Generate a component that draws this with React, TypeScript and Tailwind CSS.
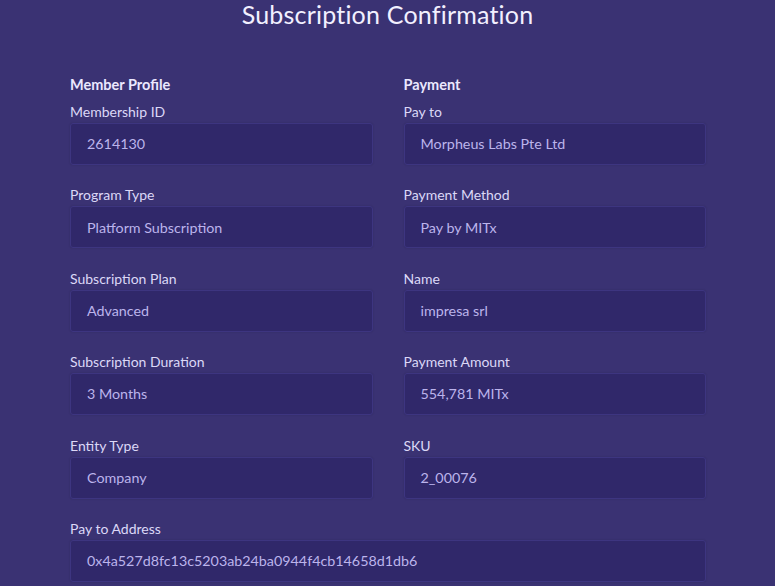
import React from 'react';

type Field = { label: string; value: string };

const left: Field[] = [
  { label: 'Membership ID', value: '2614130' },
  { label: 'Program Type', value: 'Platform Subscription' },
  { label: 'Subscription Plan', value: 'Advanced' },
  { label: 'Subscription Duration', value: '3 Months' },
  { label: 'Entity Type', value: 'Company' },
];

const right: Field[] = [
  { label: 'Pay to', value: 'Morpheus Labs Pte Ltd' },
  { label: 'Payment Method', value: 'Pay by MITx' },
  { label: 'Name', value: 'impresa srl' },
  { label: 'Payment Amount', value: '554,781 MITx' },
  { label: 'SKU', value: '2_00076' },
];

const FieldBox = ({ label, value }: Field) => (
  <div className="mb-[20.4px]">
    <div className="text-[14px] leading-[20px] text-[#dcd8f7] mb-[1px]">{label}</div>
    <div className="h-[42px] flex items-center px-4 rounded-[3px] bg-[#30286a] border border-[#3d3580] shadow-[0_0_2px_rgba(0,0,0,0.15)] text-[14.3px] text-[#bcb4ec]">
      {value}
    </div>
  </div>
);

const Column = ({ title, fields }: { title: string; fields: Field[] }) => (
  <div>
    <div className="text-[14.5px] leading-[20px] font-bold text-[#ebe8ff] mb-[7px]">{title}</div>
    {fields.map((f) => (
      <FieldBox key={f.label} {...f} />
    ))}
  </div>
);

export default function App() {
  return (
    <div
      className="w-full min-h-screen bg-[#3a3273] overflow-hidden"
      style={{ fontFamily: 'Lato, "Open Sans", sans-serif' }}
    >
      <h1 className="text-center text-[25px] leading-[30px] text-[#f2f0ff] tracking-[0.2px] -mt-px">
        Subscription Confirmation
      </h1>
      <div className="w-[637px] mx-auto mt-[46px] pl-px">
        <div className="grid grid-cols-2 gap-x-[31px]">
          <Column title="Member Profile" fields={left} />
          <Column title="Payment" fields={right} />
        </div>
        <FieldBox label="Pay to Address" value="0x4a527d8fc13c5203ab24ba0944f4cb14658d1db6" />
      </div>
    </div>
  );
}
